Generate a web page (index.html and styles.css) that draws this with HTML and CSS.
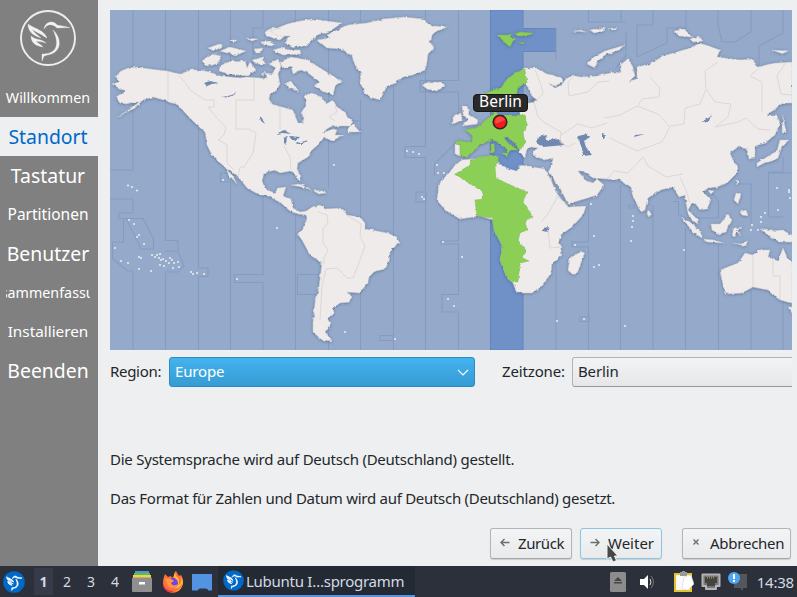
FILE: index.html
```html
<!DOCTYPE html>
<html lang="de">
<head>
<meta charset="utf-8">
<title>Lubuntu Installationsprogramm</title>
<link rel="stylesheet" href="styles.css">
</head>
<body>
<svg width="0" height="0" class="defs">
  <defs>
    <symbol id="bird" viewBox="0 0 60 60">
      <path d="M10 16C17 21 26 22 29 30L27 29C22 25 17 24 14 21C16 25 20 27 23 30C17 28 10 25 10 16Z"/>
      <path d="M13 28C17 32 24 31 28 35C23 33 20 34 18 33C20 36 23 36 25 39C18 38 13 35 13 28Z"/>
      <path d="M26 21C27 13 36 12 39 17L52 19.500L39 20C34 15 29 16 26 21Z"/>
      <path d="M35 22C42 28 44 39 37 44C33 47 28 47 26 48L24 53V46C29 46 35 45 37.500 40C40 35 38 28 35 22Z"/>
    </symbol>
  </defs>
</svg>
<main class="window">
  <nav class="sidebar">
    <svg class="logo" viewBox="0 0 60 60"><circle cx="30" cy="30" r="27" fill="none" stroke="#eee" stroke-width="1.900"/><use href="#bird" fill="#f3f3f3" stroke="#f3f3f3" stroke-width=".3"/></svg>
    <ul class="steps">
      <li class="step s1"><span>Willkommen</span></li>
      <li class="step s2 active"><span>Standort</span></li>
      <li class="step s3"><span>Tastatur</span></li>
      <li class="step s4"><span>Partitionen</span></li>
      <li class="step s5"><span>Benutzer</span></li>
      <li class="step s6"><span>Zusammenfassung</span></li>
      <li class="step s7"><span>Installieren</span></li>
      <li class="step s8"><span>Beenden</span></li>
    </ul>
  </nav>
  <section class="content">
    <div class="map">
    <svg class="world" viewBox="110 10 682 340">
      <defs>
        <filter id="coast" x="0" y="0" width="1" height="1" filterUnits="objectBoundingBox">
          <feTurbulence type="fractalNoise" baseFrequency=".22" numOctaves="2" seed="4" result="n"/>
          <feDisplacementMap in="SourceGraphic" in2="n" scale="3" xChannelSelector="R" yChannelSelector="G" result="land"/>
          <feDropShadow in="land" dx="0" dy=".5" stdDeviation="1.6" flood-color="#33496f" flood-opacity=".6"/>
        </filter>
      </defs>
      <rect x="110" y="10" width="682" height="340" fill="#95aacb"/>
      <path class="zone" d="M490.5 10H523V28.500H555.500V51.500H523V350H490.500Z"/>
      <path class="grid" d="M133 10V170H110M110 199H133V213H119V218.500H143L153.500 239V249H141L126 218.500H123.500V242H112.500V259L128 271H133V350M165.500 10V240.500H178V251H165.500M178 251L184 266L178 272H165.500V350M198.500 10V268H208V276.500H198.500V350M230.500 10V173H220.500V182H230.500V350M263 10V28H253V60M263 180V274.500H234.500V282.500H263V350M295.500 10V24M295.500 215V350M328.500 10V120M328.500 140V188M328.500 290V350M360.500 10V22M360.500 100V350M353 121H360.500M393.500 86V350M425.500 10V18M425.500 70V146.500H405V157.500H425.500V350M458.500 10V80.500H420V92H458.500V122M455 144L434.500 164V176M458.500 219V241H441V244H458.500V294.500H442V312H458.500V350M556 28V60M556 262V350M620.500 185V350M653 205V350M685.500 228V350M718.500 245V350M751 290V350M783 300V350M588.500 10V22H620.500M588.500 202V242H572V247H588.500V350M626 32V55L615 69M621 10V22H626M653 10V25H637V57L667 43V28H686V10M718 10V25L722 42H735L751 32V10M783 10V33L759 46V66M297.500 274.500H322M297.500 274.500V294.500H325M380 335.500H393V340.500H380ZM416 192H426V202H416ZM580 317H589V321.500H580ZM673 201.500H678.500V214.500L685 218H718.500V201.500L710 191M629 205H634V208H629ZM738 184H751V225M768.500 173V217H783M768.500 173H792M768.500 190V172H783V157"/>
      <g filter="url(#coast)">
        <rect x="110" y="10" width="682" height="340" fill="none"/>
        <g class="land">
          <path d="M112 84L120 82L115 76L121 71L128 68L137 67L150 69L167 71L180 74L191 70L200 70L210 72L220 76L230 77L240 78L247 77L260 78L267 79L266 73L272 74L276 68L269 64L278 59L281 66L278 74L280 84L276 91L270 94L269 99L272 104L282 107L293 110L296 118L298 123L303 123L304 117L301 113L306 105L305 95L312 93L321 97L326 104L333 100L337 107L345 112L349 118L353 122L349 126L339 126L330 127L322 133L333 129L337 130L335 135L343 135L332 141L324 137L320 143L312 150L308 157L298 163L297 169L301 177L300 181L297 178L293 172L290 171L280 173L275 170L264 173L262 181L267 190L275 193L278 188L286 187L283 196L291 199L293 208L300 212L307 211L306 215L298 214L290 211L281 203L270 197L256 193L247 188L240 179L230 170L227 170L233 176L237 184L229 175L225 167L219 162L212 155L207 145L205 132L197 125L188 116L178 105L167 101L153 97L143 100L135 108L117 117L133 107L139 102L134 102L126 104L120 102L116 97L125 91L117 87Z"/>
          <path d="M202 61L211 54L222 56L217 64L207 66ZM220 66L232 60L238 62L245 60L247 68L250 62L256 70L248 76L229 74L219 71ZM208 48L219 44L223 46L214 51ZM220 51L230 47L246 51L237 55L227 53ZM229 40L237 40L234 43ZM246 38L258 39L252 41ZM254 49L263 48L260 53L256 53ZM252 60L263 57L265 64L256 64ZM261 74L265 72L264 76ZM265 32L273 27L281 30L287 34L280 40L266 36ZM260 42L270 41L275 44L272 46L264 45ZM273 50L280 48L290 50L300 50L301 54L283 55Z"/>
          <path d="M270 31L287 24L300 21L313 19L342 23L330 31L317 35L307 46L294 47L285 43L290 36L278 36ZM280 62L291 57L308 60L320 68L330 74L342 82L335 86L333 95L322 91L314 86L320 82L308 73L301 70L293 74L291 66L283 69ZM286 83L291 81L298 91L288 88ZM349 127L353 124L360 132L347 132ZM317 40L330 38L327 35L337 30L347 25L367 23L383 19L403 17L424 19L427 23L434 26L447 27L433 33L430 42L434 48L428 54L427 62L425 70L413 75L403 77L396 83L387 86L380 100L370 97L364 91L360 82L361 74L355 65L352 56L342 49L327 48ZM422 85L430 83L440 82L445 86L437 91L427 89Z"/>
          <path d="M305 212L312 207L320 205L325 209L340 208L348 215L360 217L365 223L365 229L377 231L387 233L397 237L399 242L390 252L389 262L385 269L375 271L369 277L368 283L359 293L348 292L352 297L349 302L340 303L333 308L334 313L328 318L331 323L325 332L332 341L322 340L313 332L313 322L315 303L319 287L322 263L310 255L302 240L298 235L303 228L307 218ZM291 185L300 184L312 190L302 187ZM314 191L320 190L327 193L318 194Z"/>
          <path d="M462 160L472 159L480 157L498 156L498 163L507 168L517 171L520 165L533 167L545 169L551 180L556 192L562 200L568 207L586 206L583 215L572 227L562 234L559 240L562 255L552 263L551 273L543 285L532 293L517 293L513 283L507 278L500 260L503 247L494 230L493 220L480 216L460 219L445 210L437 200L439 183L450 172L455 165ZM582 251L584 255L577 273L572 275L568 270L570 258ZM455 144L460 145L460 156L455 154Z"/>
          <path d="M523 68L538 68L545 73L562 78L563 82L555 86L548 83L555 88L562 85L565 80L572 75L580 77L597 76L615 72L621 73L620 65L628 59L633 67L635 76L629 81L637 79L637 67L650 64L663 56L690 48L700 43L720 50L717 57L740 60L752 59L758 67L770 64L777 63L792 62V103L783 103L767 115L777 115L780 123L775 135L765 143L755 146L755 158L749 159L747 149L738 147L730 153L733 160L738 168L737 173L727 183L717 187L707 188L703 192L711 200L707 209L700 210L696 204L692 203L688 210L697 219L698 224L692 220L688 213L686 203L685 195L679 197L673 187L660 190L648 198L645 210L641 212L633 197L631 187L620 180L607 179L593 178L583 171L578 171L585 180L593 183L597 179L604 185L597 195L568 204L560 188L548 172L552 165L553 158L544 160L535 156L532 152L538 148L531 147L527 149L525 158L520 152L520 112L525 105L537 100L532 96L526 84Z"/>
          <path d="M462 106L467 106L470 115L478 120L477 124L462 126L468 120L463 114ZM453 117L461 113L462 120L453 124ZM587 64L594 57L605 51L625 45L619 50L605 55L598 61L595 68ZM674 31L684 29L692 37L679 36ZM690 39L699 36L703 41L693 42ZM772 50L788 51L783 54ZM783 116L786 132L782 132ZM780 140L789 140L782 146L778 158L772 161L764 163L757 167L757 163L770 155L777 151ZM573 31L582 30L586 32ZM590 30L597 29L605 27L604 31L594 33ZM608 29L617 27L613 30ZM648 210L652 214L649 217L647 214ZM708 190L714 191L711 194ZM736 180L739 181L737 185Z"/>
          <path d="M681 217L690 222L702 233L702 238L694 233ZM703 239L714 240L724 243L707 242ZM711 224L720 224L728 214L732 220L726 232L719 234L712 230ZM734 228L742 227L737 230L741 236L736 232L735 237L732 234ZM736 193L741 194L738 204L734 200ZM740 212L746 210L748 216L742 215ZM760 229L770 231L782 230L792 235V242L780 242L771 237ZM733 243L740 244L748 242L745 246ZM720 270L738 263L745 253L753 255L758 250L770 250L768 257L778 261L783 248L787 257L792 262V303L780 300L773 295L768 290L753 287L742 293L725 294L722 280ZM788 307H792V313Z"/>
        </g>
        <g class="green">
          <path d="M525 69L527 83L518 87L516 98L506 105L497 102L487 105L482 97L488 92L500 88L508 78L517 72ZM525 115L527 125L523 133L525 143L520 151L515 143L508 138L503 137L510 145L518 150L511 150L508 154L506 149L498 142L492 140L480 144L473 152L468 157L460 156L460 145L455 143L457 141L472 142L472 135L465 130L478 127L488 118L493 115L495 110L498 115ZM498 35L508 35L513 33L510 37L516 39L513 41L510 47L504 42ZM515 34L520 32L533 33L526 36L518 36ZM519 42L527 43L522 44ZM491 144L494 143L495 152L491 153ZM501 153L508 153L507 156Z"/>
          <path d="M455 174L470 165L471 160L480 157L498 156L498 163L495 167L496 178L508 184L527 192L523 202L533 217L525 220L527 230L520 233L518 240L523 247L526 250L523 258L529 261L520 263L518 282L512 282L507 278L500 260L503 247L494 230L492 218L477 216L475 200L483 199L483 192Z"/>
        </g>
        <path class="water" d="M536 143L538 137L547 135L545 139L550 140L557 138L565 145L543 147ZM577 137L587 133L590 137L584 141L586 147L592 155L583 156L582 148ZM543 228L549 227L547 232L543 231ZM204 83L210 81L219 83L212 84L207 86ZM221 97L228 96L237 93L228 97.500ZM259.500 116L262 118L265 124L261 121ZM276 134L284 130L291 134L283 133ZM284 138L287 136L286 145L284 143ZM289 136L300 137L296 141L291 139ZM295 144L308 140L302 144ZM634 137L645 134L635 135ZM701 122L710 117L712 113L709 121ZM530 99L538 100L531 102ZM602 134L606 135L602 140Z"/>
      </g>
      <path class="border" d="M168 71V100M178 75L185 82L190 90L205 100H214V107H208L215 116L226 127L224 135L218 140L227 145V163L234 170M254 77V100H236V129H249L256 133L253 153L244 167L240 167L238 177M280 107V129M284 146L290 157L291 170M335 106L337 112L329 117L335 121M318 212L327 215L328 223L323 229V243L328 250L324 258L324 264M348 216L361 224L360 236L365 246L360 260L353 278L347 278L337 268L326 269L322 286L320 320M535 70L541 85L543 94L534 102L538 117L545 123L561 132L560 142L568 147L575 143M575 75L568 82L569 96L588 92L598 82L609 81M561 135L578 124L592 128L607 123M604 118L620 115L637 106L658 114L670 127L662 142L637 151L610 138M638 105L642 99L659 97L660 88L650 77M670 126L684 124L685 108L700 104L706 89L715 102L731 104L728 117L715 127L738 122L746 118L758 129L770 130M706 88L705 71L718 62M759 68L750 76L762 82L762 112M786 62L777 76L781 94L792 95M558 196L548 214L541 222M548 230L550 248L562 247M556 195L568 206M607 179L614 171L628 173L643 157L648 166L666 177L683 174M690 203L686 190L680 177M753 254V287M773 260V276H780V300"/>
      <g class="dots"><path d="M128 185.500h.01M132 187h.01M137 190.500h.01M129 220h.01M134 224h.01M139 235h.01M137 237h.01M144 244h.01M115 248h.01M121 261h.01M128 263h.01M139 257h.01M141 258h.01M152 255h.01M155 257h.01M157 255h.01M159 258h.01M160 254h.01M161 260h.01M163 259h.01M166 261h.01M169 263h.01M170 258h.01M172 260h.01M174 263h.01M178 262h.01M179 267h.01M173 268h.01M164 266h.01M160 265h.01M151 271h.01M139 269h.01M191 272h.01M193 274h.01M197 273h.01M204 274h.01M237 279h.01M223 180h.01M277 228h.01M334 165h.01M407 151h.01M413 152h.01M419 154h.01M437 165h.01M438 173h.01M444 173h.01M422 197h.01M424 199h.01M443 242h.01M462 257h.01M448 299h.01M454 306h.01M575 245h.01M594 267h.01M599 265h.01M594 236h.01M591 204h.01M557 321h.01M584 319h.01M633 216h.01M633 221h.01M632 227h.01M631 241h.01M684 250h.01M625 326h.01M345 332h.01M395 339h.01M777 188h.01M778 210h.01M789 190h.01M790 198h.01M789 192h.01M761 222h.01M761 217h.01M765 213h.01M752 225h.01M751 230h.01M758 230h.01"/></g>
      <circle cx="500" cy="122" r="6.800" fill="#f41b1b" stroke="#302525" stroke-width="1.500"/>
      <path d="M495.500 124Q494 117 500 116.500Q504 117 505 120Z" fill="#f84a44"/>
    </svg>
    <div class="pin">Berlin</div>
    </div>
    <form class="zoneform">
      <label class="rlabel">Region:</label>
      <div class="combo region"><span>Europe</span><svg width="12" height="7" viewBox="0 0 12 7"><path d="M1 1L6 6L11 1" fill="none" stroke="#fff" stroke-width="1.200"/></svg></div>
      <label class="zlabel">Zeitzone:</label>
      <div class="combo city"><span>Berlin</span></div>
    </form>
    <p class="info first">Die Systemsprache wird auf Deutsch (Deutschland) gestellt.</p>
    <p class="info second">Das Format für Zahlen und Datum wird auf Deutsch (Deutschland) gesetzt.</p>
    <div class="actions">
      <div class="btn back"><svg width="10" height="9" viewBox="0 0 10 9"><path d="M9.500 4.500H1M4.500 1L1 4.500L4.500 8"/></svg><span>Zurück</span></div>
      <div class="btn next"><svg width="10" height="9" viewBox="0 0 10 9"><path d="M.5 4.500H9M5.500 1L9 4.500L5.500 8"/></svg><span>Weiter</span></div>
      <div class="btn cancel"><svg width="10" height="9" viewBox="0 0 10 9"><path d="M1.500 1.500L6.500 6.500M6.500 1.500L1.500 6.500"/></svg><span>Abbrechen</span></div>
    </div>
  </section>
</main>
<footer class="panel">
  <svg class="menu" width="22" height="22" viewBox="0 0 60 60"><circle cx="30" cy="30" r="29.500" fill="#0068c8"/><use href="#bird" fill="#fff" stroke="#fff" stroke-width="2"/></svg>
  <div class="desks"><b>1</b><span>2</span><span>3</span><span>4</span></div>
  <svg class="files" width="20" height="21" viewBox="0 0 20 21"><path fill="#5294e2" d="M3 0h14v3H3z"/><path fill="#58c048" d="M2 2h16v3H2z"/><path fill="#f6cf4b" d="M1 4h18v3H1z"/><rect y="6.500" width="20" height="14.500" rx="1" fill="#8f8f8f"/><path fill="#fff" d="M7 11h6v2.500H7z"/></svg>
  <svg class="fox" width="22" height="22" viewBox="0 0 22 22"><path fill="#ff7139" d="M3 3L6 6L9 5L10 7C13 4 12 2 14 0L17 5L19 4C23 10 21 20 13 21.500C6 23 1 18 1 12C1 8 2 6 3 3Z"/><path fill="#ffc735" d="M14 0C12 4 14 5 16 7C18 10 17 13 15 15C20 12 20 10 19 6C23 11 20 20 13 21C20 18 20 14 20 12C18 17 14 18 11 17C17 15 16 9 14 8C11 6 12 2 14 0Z"/><circle cx="11" cy="12" r="5" fill="#7542e5"/><path fill="#ff9640" d="M3 8C7 7 10 8 12 10L9 12C10 15 13 15 16 13C13 19 6 18 5 12Z"/><path fill="#ed3156" d="M1 12C2 17 6 20 12 20C8 23 1 20 1 12Z"/></svg>
  <svg class="desktop" width="20" height="18" viewBox="0 0 20 18"><path fill="#5294e2" d="M0 1h20v16.500H0z"/><path fill="#2b3546" d="M6 18v-1.500l2-1h6l2 1V18z"/></svg>
  <div class="task"><svg width="21" height="21" viewBox="0 0 60 60"><circle cx="30" cy="30" r="29.500" fill="#0068c8"/><use href="#bird" fill="#fff" stroke="#fff" stroke-width="2"/></svg><span>Lubuntu I…sprogramm</span></div>
  <div class="tray">
    <svg width="16" height="20" viewBox="0 0 16 20"><rect width="16" height="20" rx="1.500" fill="#8c8c8c"/><path fill="#464646" d="M4 9L8 5L12 9ZM4 10h8v1.500H4z"/></svg>
    <svg class="vol" width="15" height="14" viewBox="0 0 15 14"><path d="M0 4h4l4-4v14l-4-4H0z" fill="#fff"/><path d="M10 4q2 3 0 6" fill="none" stroke="#ddd"/><path d="M11 1q5 6 0 12" fill="none" stroke="#72767e"/></svg>
    <svg class="clip" width="20" height="21" viewBox="0 0 20 21"><rect x="1" y="3" width="16" height="17" fill="#fafafa" stroke="#e5c229" stroke-width="2"/><path fill="#999" d="M6 1h2V0h3v1h2v4H6z"/><path fill="#fff" stroke="#c9c9c9" stroke-width=".5" d="M10 6L17 4L20 13L14 19L8 18Z"/></svg>
    <svg class="net" width="20" height="18" viewBox="0 0 20 18"><path d="M1.500 1.500h17V13H15v3H5v-3H1.500z" fill="#777" stroke="#b4b4b4" stroke-width="2" stroke-linejoin="round"/><path d="M4 4h12v6h-2v3H6v-3H4z" fill="#444342"/><path stroke="#a08c50" stroke-width="1" d="M6.500 3.500v2M8.500 3.500v2M10.500 3.500v2M12.500 3.500v2"/></svg>
    <svg class="note" width="19" height="19" viewBox="0 0 19 19"><path fill="#54565c" d="M6 2h13v14h-4v3l-3-3H6z"/><circle cx="6" cy="6" r="6" fill="#4da6f2"/><path fill="#fff" d="M5 2h2v5H5zM5 8h2v2H5z"/></svg>
    <span class="clock">14:38</span>
  </div>
</footer>
<svg class="cursor" width="13" height="20" viewBox="0 0 13 20"><path d="M1 1V16L4.500 14L7 19L10.500 17.500L8.500 13H12Z" fill="#474747" stroke="#f2f2f2" stroke-width="1"/></svg>
</body>
</html>
```
FILE: styles.css
```css
* { box-sizing: border-box; }
body { margin: 0; width: 797px; height: 597px; overflow: hidden; display: flex; flex-direction: column; background: #eeeff1; color: #23272a; font: 15px/20px "Noto Sans", sans-serif; white-space: nowrap; }
.defs { position: absolute; }
.window { display: flex; height: 566px; flex: none; }
.sidebar { width: 98px; background: #808080; color: #fff; flex: none; }
.logo { display: block; width: 60px; height: 60px; margin: 8px 0 10px 18px; }
.steps { list-style: none; margin: 0; padding: 0; }
.step { height: 39px; display: flex; align-items: center; justify-content: center; margin: 0; padding: 0 7px 0 5px; }
.step span { flex: none; }
.active { background: #eeeff1; color: #0068c8; }
.s1, .s6 { font-size: 14.3px; }
.s2, .s3, .s5, .s8 { font-size: 19.4px; }
.s4 { font-size: 15.5px; padding-bottom: 2px; }
.s7 { font-size: 15.3px; padding-bottom: 1px; }
.s6 { margin: 0 8px 0 6px; padding: 0; overflow: hidden; }
.content { flex: 1; min-width: 0; padding: 10px 5px 0 12px; display: flex; flex-direction: column; }
.map { position: relative; height: 340px; flex: none; }
.world { display: block; width: 682px; height: 340px; }
.zone { fill: #6f91c8; stroke: #6484bb; stroke-width: 1; }
.grid { fill: none; stroke: #869bc0; stroke-width: 1.1; }
.land { fill: #efebea; stroke: #c3c6cb; stroke-width: .5; }
.green { fill: #8ccf57; stroke: #78b14e; stroke-width: .4; }
.water { fill: #7189b0; }
.border { fill: none; stroke: #d9d5d4; stroke-width: .9; stroke-linejoin: round; }
.dots path { fill: none; stroke: #eee; stroke-width: 2; stroke-linecap: round; }
.pin { position: absolute; left: 363px; top: 84px; width: 55px; height: 18px; border-radius: 4px; background: #2a2a2a; border: 1px solid #171717; color: #fff; font-size: 15.5px; line-height: 13px; text-align: center; }
.zoneform { display: flex; align-items: center; height: 30px; margin: 7px 0 0; flex: none; overflow: hidden; letter-spacing: -.15px; }
.zoneform label, .combo span { flex: none; padding-bottom: 2px; }
.rlabel { width: 59px; letter-spacing: -.3px; }
.combo { height: 30px; border: 1px solid #b1b3b5; border-bottom-color: #999; border-radius: 3px; display: flex; align-items: center; justify-content: space-between; padding: 0 5px; background: linear-gradient(#f2f3f4, #e6e7e9); flex: none; }
.region { width: 306px; background: linear-gradient(#43b3ef, #369bd3); border-color: #2c8cc2; color: #fff; }
.zlabel { margin-left: 27px; width: 70px; }
.city { width: 240px; }
.info { margin: 0; height: 20px; flex: none; letter-spacing: -.24px; }
.first { margin-top: 62px; }
.second { margin-top: 19px; letter-spacing: -.28px; }
.actions { display: flex; margin: 20px 0 0 380px; flex: none; }
.btn { height: 31px; border: 1px solid #b3b5b7; border-bottom-color: #a4a6a8; border-radius: 3px; background: linear-gradient(#f3f4f5, #e9eaeb); display: flex; align-items: center; padding: 0 0 2px 9px; box-shadow: 0 1px 1px #ccc; flex: none; letter-spacing: -.25px; }
.btn svg { fill: none; stroke: #6b6d6f; stroke-width: 1.4; margin-right: 8px; }
.back { width: 82px; letter-spacing: -.4px; }
.next { width: 82px; margin-left: 8px; border-color: #89c7e4; letter-spacing: 0; }
.cancel { width: 109px; margin-left: 20px; }
.panel { height: 31px; background: #2b303b; color: #d3dae3; display: flex; align-items: center; padding-left: 3px; flex: none; }
.desks { display: flex; margin-left: 9px; font-size: 14px; line-height: 27px; text-align: center; }
.desks b, .desks span { width: 24px; }
.desks b { width: 19px; background: #373b49; margin-right: 2px; }
.files { margin-left: 5px; }
.fox { margin-left: 10px; }
.desktop { margin-left: 8px; }
.task { width: 197px; height: 31px; margin-left: 6px; padding-left: 5px; display: flex; align-items: center; background: #242a34; border-bottom: 2px solid #5294e2; letter-spacing: -.27px; }
.task span { margin-left: 2px; }
.tray { display: flex; align-items: center; margin-left: auto; padding-right: 3px; }
.vol { margin-left: 14px; }
.clip { margin-left: 19px; }
.net { margin-left: 7px; }
.note { margin-left: 7px; }
.clock { margin-left: 10px; letter-spacing: -.2px; }
.cursor { position: absolute; left: 606px; top: 543px; }
```
